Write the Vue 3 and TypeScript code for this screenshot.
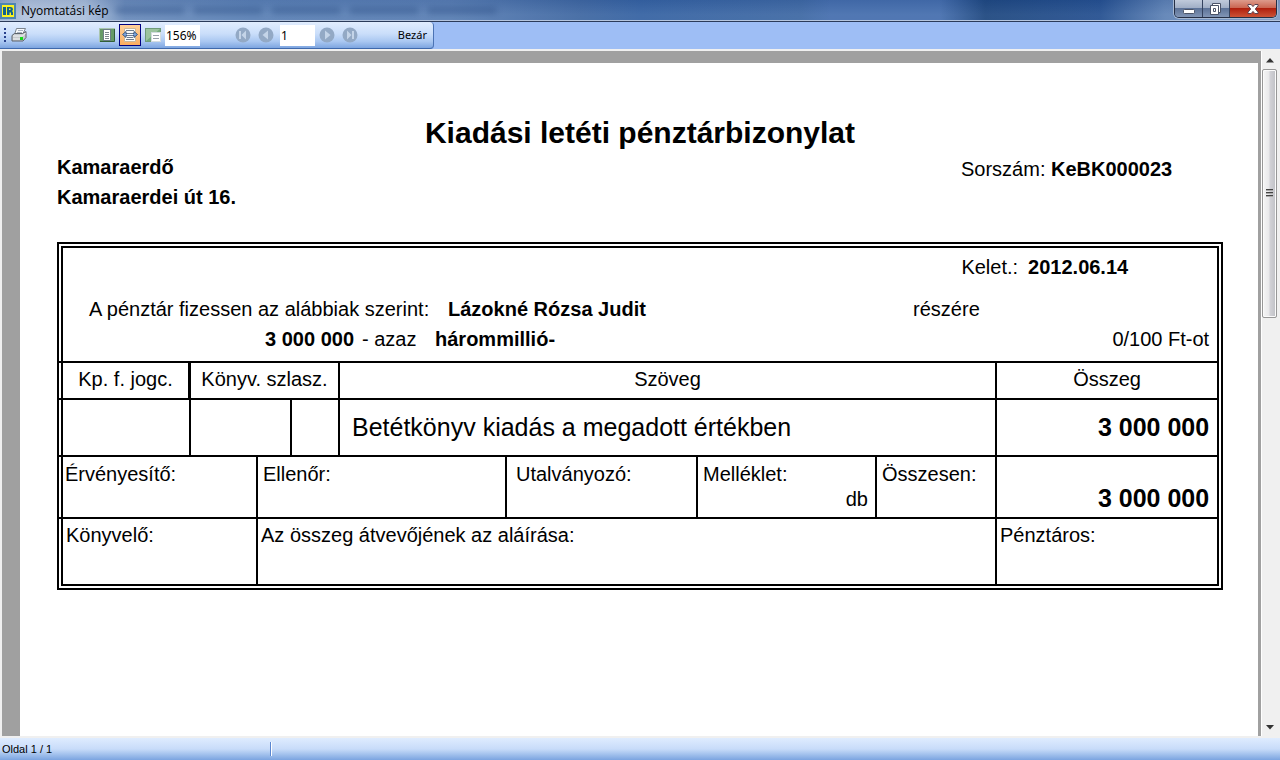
<script setup lang="ts">
import { ref } from 'vue'

const zoomLevel = ref('156%')
const pageNumber = ref('1')
const columns = [128, 67, 34, 48, 167, 191, 179, 120, 220]
</script>

<template>
  <div class="window">
    <header class="titlebar">
      <svg class="app-icon" width="16" height="16" viewBox="0 0 16 16" aria-hidden="true">
        <rect x="0" y="0" width="16" height="16" fill="#4d86b0" />
        <rect x="2" y="2" width="12" height="12" fill="#fbf320" />
        <path d="M3 4h3v8H3z" fill="#12648f" />
        <path d="M7 4h3.500q2.500 0 2.500 2.200q0 1.300-1 1.700q1 .5 1 1.800V12h-2V9.500H9.500V12H7z" fill="#12648f" />
        <path d="M9 5.500h1.500v1.500H9z" fill="#fbf320" />
      </svg>
      <h1 class="caption">Nyomtatási kép</h1>
      <div class="backdrop" aria-hidden="true">
        <i class="smudge s1"></i><i class="smudge s2"></i><i class="smudge s3"></i><i class="smudge s4"></i><i class="smudge s5"></i>
      </div>
      <div class="window-buttons">
        <button type="button" class="wbtn" aria-label="Kis méret">
          <svg width="14" height="14" viewBox="0 0 14 14"><rect x="1.500" y="7.500" width="11" height="4" rx="1" fill="#fff" stroke="#4b5468" /></svg>
        </button>
        <button type="button" class="wbtn" aria-label="Előző méret">
          <svg width="14" height="14" viewBox="0 0 14 14" fill="#fff" stroke="#4b5468"><path d="M3.500 1.500h8v9h-8z" /><path d="M1.500 3.500h8v9h-8zM4.500 6.500v3h2v-3z" fill-rule="evenodd" /></svg>
        </button>
        <button type="button" class="wbtn close" aria-label="Bezárás">
          <svg width="14" height="14" viewBox="0 0 14 14"><path d="M2 2.500h3.200L7 4.600l1.800-2.100H12v1.300L9.300 7l2.700 3.200v1.300H8.800L7 9.400l-1.800 2.100H2v-1.300L4.700 7 2 3.800z" fill="#fff" stroke="#5a4050" /></svg>
        </button>
      </div>
    </header>

    <nav class="toolbar-row" aria-label="Eszköztár">
      <div class="toolbar">
        <span class="grip" aria-hidden="true"></span>
        <button type="button" class="tool print" aria-label="Nyomtatás">
          <svg width="16" height="16" viewBox="0 0 16 16">
            <path d="M5.500 1.500h9l-3 6h-8z" fill="#f8fafc" stroke="#7c858e" />
            <path d="M7 3.500h5M6 5.500h5" stroke="#a9b4c2" />
            <path d="M1 8.500l2.500-2h8l3.500-2v6l-3 3.500H1z" fill="#c6cacd" stroke="#5c636a" />
            <path d="M2 9h9.500l3-3" fill="none" stroke="#f4f6f7" />
            <path d="M2 12h7" stroke="#f4f6f7" />
            <rect x="9" y="10" width="3" height="3" fill="#16d81c" />
          </svg>
        </button>
        <span class="spacer"></span>
        <button type="button" class="tool" aria-label="Teljes oldal">
          <svg width="16" height="16" viewBox="0 0 16 16">
            <rect x=".5" y="1.500" width="15" height="13" fill="#669a67" stroke="#a9c5ae" />
            <path d="M1 14.500h14.500V2" fill="none" stroke="#315f38" />
            <rect x="4.500" y="2.500" width="7" height="11" fill="#fff" stroke="#6d7e85" />
            <path d="M6 5.500h4M6 7.500h4M6 9.500h4M6 11.500h4" stroke="#7d8790" />
          </svg>
        </button>
        <button type="button" class="tool selected" aria-label="Oldalszélesség" aria-pressed="true">
          <svg width="16" height="16" viewBox="0 0 16 16">
            <path d="M2.500 1.500h11v13h-11z" fill="#fbfbf8" stroke="#c9b89c" />
            <path d="M4 3.500h8M4 12.500h8" stroke="#6e7b8d" />
            <path d="M.5 7.500L4 4.500v2h8v-2l3.500 3-3.500 3v-2H4v2z" fill="#7ba4dc" stroke="#41597e" />
            <path d="M5 5.500h6M5 7.500h6M5 9.500h6" stroke="#f4f7fb" />
            <path d="M5 6.500h6M5 8.500h6M5 10.500h6" stroke="#6e7b8d" />
          </svg>
        </button>
        <button type="button" class="tool" aria-label="Miniatűrök">
          <svg width="16" height="16" viewBox="0 0 16 16">
            <rect x=".5" y="1.500" width="15" height="13" fill="#75aa7c" stroke="#6f9b78" />
            <path d="M1 2v12L15 2z" fill="#b5d5b7" opacity=".6" />
            <rect x="6.500" y="5.500" width="9" height="9" fill="#fff" stroke="#d3dce0" />
            <path d="M8 8.500h6M8 11.500h6" stroke="#98a1ab" />
          </svg>
        </button>
        <input v-model="zoomLevel" class="field" aria-label="Nagyítás" />
        <button type="button" class="nav first" aria-label="Első oldal">
          <svg width="16" height="16" viewBox="0 0 16 16"><circle cx="8" cy="8" r="7.500" fill="#93a9c5" /><path d="M4 4h2v8H4zM11 3.500v9L6.500 8z" fill="#c4d4e8" /></svg>
        </button>
        <button type="button" class="nav" aria-label="Előző oldal">
          <svg width="16" height="16" viewBox="0 0 16 16"><circle cx="8" cy="8" r="7.500" fill="#93a9c5" /><path d="M10 3.500v9L4.500 8z" fill="#c4d4e8" /></svg>
        </button>
        <input v-model="pageNumber" class="field" aria-label="Oldalszám" />
        <button type="button" class="nav next" aria-label="Következő oldal">
          <svg width="16" height="16" viewBox="0 0 16 16"><circle cx="8" cy="8" r="7.500" fill="#93a9c5" /><path d="M6 3.500v9L11.500 8z" fill="#c4d4e8" /></svg>
        </button>
        <button type="button" class="nav" aria-label="Utolsó oldal">
          <svg width="16" height="16" viewBox="0 0 16 16"><circle cx="8" cy="8" r="7.500" fill="#93a9c5" /><path d="M10 4h2v8h-2zM5 3.500v9L9.500 8z" fill="#c4d4e8" /></svg>
        </button>
        <button type="button" class="text-button">Bezár</button>
      </div>
    </nav>

    <div class="viewer">
      <main class="desk">
        <article class="page">
          <h2 class="doc-title">Kiadási letéti pénztárbizonylat</h2>
          <div class="doc-head">
            <address class="place">Kamaraerdő<br />Kamaraerdei út 16.</address>
            <p class="serial">Sorszám: <b>KeBK000023</b></p>
          </div>

          <table class="voucher">
            <colgroup>
              <col v-for="(w, i) in columns" :key="i" :style="{ width: w + 'px' }" />
            </colgroup>
            <tbody>
              <tr class="r-order">
                <td colspan="9">
                  <p class="line dated"><span>Kelet.:</span><b>2012.06.14</b></p>
                  <p class="line payee"><span>A pénztár fizessen az alábbiak szerint:</span><b>Lázokné Rózsa Judit</b><span>részére</span></p>
                  <p class="line amount"><b class="sum">3 000 000</b><span>- azaz</span><b>hárommillió-</b><span class="rest-sum">0/100 Ft-ot</span></p>
                </td>
              </tr>
              <tr class="r-head">
                <th scope="col" class="thick">Kp. f. jogc.</th>
                <th scope="col" colspan="3">Könyv. szlasz.</th>
                <th scope="col" colspan="4">Szöveg</th>
                <th scope="col">Összeg</th>
              </tr>
              <tr class="r-item">
                <td></td>
                <td colspan="2"></td>
                <td></td>
                <td colspan="4" class="subject">Betétkönyv kiadás a megadott értékben</td>
                <td class="money">3 000 000</td>
              </tr>
              <tr class="r-sign">
                <td colspan="2" class="near">Érvényesítő:</td>
                <td colspan="3">Ellenőr:</td>
                <td class="wide">Utalványozó:</td>
                <td>Melléklet:<span class="unit">db</span></td>
                <td>Összesen:</td>
                <td class="money">3 000 000</td>
              </tr>
              <tr class="r-last">
                <td colspan="2">Könyvelő:</td>
                <td colspan="6">Az összeg átvevőjének az aláírása:</td>
                <td>Pénztáros:</td>
              </tr>
            </tbody>
          </table>
        </article>
      </main>

      <div class="scrollbar">
        <button type="button" class="arrow" aria-label="Fel"><svg width="8" height="5" viewBox="0 0 8 5"><path d="M4 0l4 4.500H0z" fill="#333" /></svg></button>
        <div class="track">
          <div class="thumb"><svg width="8" height="8" viewBox="0 0 8 8"><path d="M0 .5h7M0 3.500h7M0 6.500h7" stroke="#444" /><path d="M0 1.500h7M0 4.500h7M0 7.500h7" stroke="#aaa" /></svg></div>
          <div class="rest"></div>
        </div>
        <button type="button" class="arrow" aria-label="Le"><svg width="8" height="5" viewBox="0 0 8 5"><path d="M0 0h8L4 4.500z" fill="#333" /></svg></button>
      </div>
    </div>

    <footer class="statusbar">
      <span class="status">Oldal 1 / 1</span>
    </footer>
  </div>
</template>

<style>
html,
body {
  margin: 0;
  height: 100%;
}
</style>

<style scoped>
* {
  box-sizing: border-box;
}
.window {
  display: flex;
  flex-direction: column;
  height: 100vh;
  overflow: hidden;
  background: #f0f0f0;
  color: #000;
  font-family: "Liberation Sans", Arial, sans-serif;
}
button {
  display: flex;
  align-items: center;
  justify-content: center;
  padding: 0;
  border: 0;
  background: none;
  font: inherit;
  color: inherit;
}
p,
h1,
h2 {
  margin: 0;
}
.titlebar {
  display: flex;
  flex: none;
  height: 22px;
  border-bottom: 1px solid #2b3b59;
  box-shadow: inset 0 -1px #b5c5dd;
  background:
    linear-gradient(180deg, rgba(20, 50, 110, 0.12), rgba(255, 255, 255, 0.06) 70%),
    linear-gradient(90deg, #8fa9cd 0, #b3c4dd 25px, #abbfdb 85px, #6c8dbc 125px, #5c82b6 250px, #5a7fb4 450px, #4068a2 580px, #3663a3 640px, #3f69a4 800px, #466fae 830px, #466fae 940px, #1f4880 985px, #255090 1100px, #5f83b6 1165px, #7f9cc6 100%);
}
.app-icon {
  flex: none;
  margin: 3px 5px 0 0;
}
.caption {
  font: 12px/22px "Open Sans", "Noto Sans", sans-serif;
  white-space: nowrap;
}
.backdrop {
  display: flex;
  flex: 1;
  gap: 8px;
  align-items: center;
  padding-left: 6px;
  overflow: hidden;
}
.smudge {
  width: 70px;
  height: 7px;
  border-radius: 4px;
  background: #2c4f86;
  opacity: 0.45;
  filter: blur(3px);
}
.window-buttons {
  display: flex;
  align-self: flex-start;
  height: 18px;
  margin-right: 3px;
  border: 1px solid #252f45;
  border-top: 0;
  border-radius: 0 0 5px 5px;
  box-shadow: 0 0 0 1px #a6b8d2;
  overflow: hidden;
}
.wbtn {
  width: 27px;
  background: linear-gradient(180deg, #c0cadb 0, #a1afc6 45%, #5d7398 50%, #8195b5 100%);
}
.wbtn + .wbtn {
  border-left: 1px solid #34435f;
}
.wbtn.close {
  width: 47px;
  background: linear-gradient(180deg, #dd9b8c 0, #cb6753 45%, #b0200e 50%, #cc5236 100%);
}
.toolbar-row {
  display: flex;
  flex: none;
  height: 27px;
  background: #9ebef5;
}
.toolbar {
  display: flex;
  align-items: center;
  width: 434px;
  border-right: 1px solid #4b73b4;
  border-bottom: 1px solid #3f69ac;
  border-radius: 0 4px 4px 0;
  background: linear-gradient(180deg, #e1edfe 0, #cadefa 45%, #a9c7f1 75%, #7da5e0 100%);
}
.grip {
  width: 2px;
  height: 14px;
  margin: 0 4px;
  background: repeating-linear-gradient(180deg, #27418c 0 2px, transparent 2px 4px);
}
.spacer {
  width: 68px;
}
.tool {
  width: 22px;
  height: 22px;
  margin-right: 1px;
}
.tool.print {
  width: 18px;
  margin: 0;
}
.tool.selected {
  border: 1px solid #000080;
  background: linear-gradient(180deg, #ffd09a, #fbae61);
}
.field {
  width: 35px;
  height: 21px;
  padding: 0 1px;
  border: 0;
  background: #fff;
  color: #000;
  font: 12px/20px "Noto Sans", "Open Sans", sans-serif;
}
.nav {
  width: 23px;
  height: 22px;
}
.nav.first {
  margin-left: 31px;
}
.nav + .field {
  margin-left: 3px;
}
.text-button {
  margin: 0 6px 0 auto;
  font: 11px/20px "Noto Sans", "Open Sans", sans-serif;
}
.viewer {
  display: flex;
  flex: 1;
  min-height: 0;
  padding: 2px 0 2px 2px;
}
.desk {
  flex: 1;
  min-width: 0;
  padding: 12px 3px 0 18px;
  background: #a0a0a0;
  overflow: hidden;
}
.page {
  min-height: 100%;
  padding: 50px 35px 0 37px;
  background: #fff;
  font-size: 20px;
  line-height: 30px;
}
.doc-title {
  font-size: 30px;
  line-height: 39px;
  text-align: center;
}
.doc-head {
  display: grid;
  grid-template-columns: 904fr 262fr;
  margin-bottom: 30px;
}
.place {
  font-style: normal;
  font-weight: bold;
}
.serial {
  padding-top: 2px;
  white-space: nowrap;
}
.voucher {
  width: 100%;
  table-layout: fixed;
  border: 6px double #000;
  border-collapse: separate;
  border-spacing: 0;
}
.voucher td,
.voucher th {
  padding: 0;
  border: 0 solid #000;
  border-right-width: 2px;
  border-bottom-width: 2px;
  font-weight: normal;
  text-align: left;
  vertical-align: top;
  white-space: nowrap;
}
.voucher tr > :last-child {
  border-right-width: 0;
}
.voucher .r-last td {
  border-bottom-width: 0;
}
/* Row rules run on across the gap of the double frame. */
.voucher tr:not(.r-last) > :first-child {
  position: relative;
}
.voucher tr:not(.r-last) > :first-child::before {
  content: "";
  position: absolute;
  left: -4px;
  bottom: -2px;
  width: 4px;
  height: 2px;
  background: #000;
}
.r-order {
  height: 115px;
}
.voucher .r-order td {
  padding-top: 4px;
}
.line {
  display: grid;
}
.dated {
  grid-template-columns: 965fr 189fr;
  margin-bottom: 12px;
}
.dated span {
  padding-right: 10px;
  text-align: right;
}
.payee {
  grid-template-columns: 359fr 465fr 304fr;
  padding-left: 26px;
}
.amount {
  grid-template-columns: 291fr 81fr 387fr 387fr;
  padding-right: 8px;
}
.amount .sum,
.amount .rest-sum {
  text-align: right;
}
.amount .sum + span {
  padding-left: 8px;
}
.r-head {
  height: 37px;
}
.voucher .r-head th {
  line-height: 32px;
  text-align: center;
}
.voucher .r-head .thick {
  border-right-width: 3px;
}
.r-item {
  height: 57px;
}
.voucher .r-item td {
  line-height: 55px;
}
.voucher .subject {
  padding-left: 12px;
  font-size: 25px;
}
.voucher .money {
  padding-right: 8px;
  font-size: 25px;
  font-weight: bold;
  text-align: right;
}
.r-sign {
  height: 62px;
}
.voucher .r-sign td {
  padding-left: 5px;
  line-height: 25px;
  padding-top: 5px;
}
.voucher .r-sign .near {
  padding-left: 2px;
}
.voucher .r-sign .wide {
  padding-left: 9px;
}
.unit {
  display: block;
  padding-right: 7px;
  text-align: right;
}
.voucher .r-sign .money {
  vertical-align: bottom;
  padding-bottom: 6px;
}
.r-last {
  height: 65px;
}
.voucher .r-last td {
  padding: 1px 0 0 3px;
}
.scrollbar {
  display: flex;
  flex: none;
  flex-direction: column;
  width: 19px;
  padding: 0 3px 0 0;
  border-left: 1px solid #fff;
  background: #f0f0f0;
}
.arrow {
  flex: none;
  height: 18px;
}
.track {
  display: flex;
  flex: 1;
  flex-direction: column;
}
.thumb {
  display: flex;
  align-items: center;
  justify-content: center;
  flex: 248;
  border: 1px solid #979797;
  border-radius: 2px;
  box-shadow: inset 0 0 0 1px #fbfbfb;
  background: linear-gradient(90deg, #f5f5f5 0, #e9e9eb 45%, #d1d1d6 55%, #bfc0c5 100%);
}
.rest {
  flex: 402;
}
.statusbar {
  display: flex;
  flex: none;
  align-items: center;
  height: 22px;
  padding: 0 2px;
  background: linear-gradient(180deg, #dfecff 0, #c8dcf9 50%, #a9c6ef 70%, #7ba4e0 100%);
}
.status {
  width: 269px;
  border-right: 1px solid #5a86d0;
  box-shadow: 1px 0 #fff;
  font-size: 11px;
  line-height: 14px;
}
</style>
